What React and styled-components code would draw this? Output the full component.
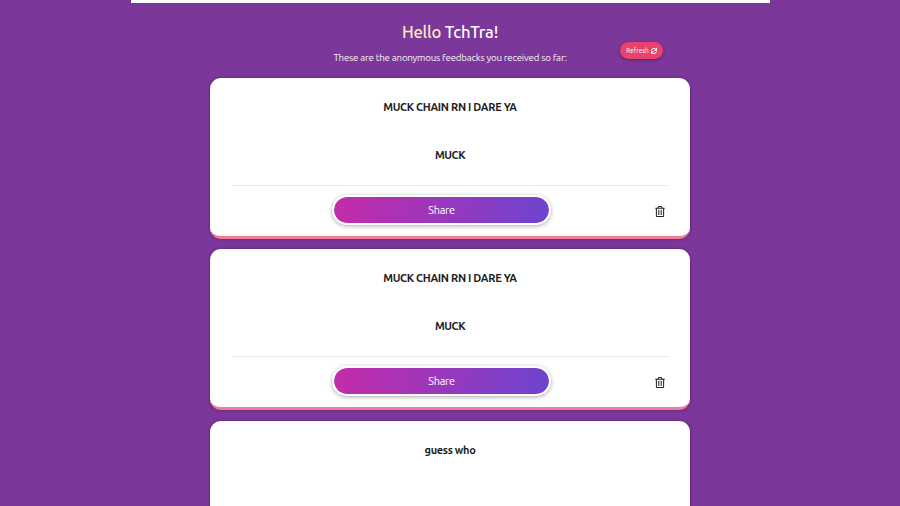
import styled, { createGlobalStyle } from "styled-components"
import { FaRegTrashAlt, FaSync } from "react-icons/fa"

const messages = [
  { title: "MUCK CHAIN RN I DARE YA", text: "MUCK" },
  { title: "MUCK CHAIN RN I DARE YA", text: "MUCK" },
  { title: "guess who" },
]

export default () => (
  <>
    <GlobalStyle />
    <Page>
      <TopBanner />
      <Header>
        <Greeting>
          <span>Hello</span> TchTra!
        </Greeting>
        <Subtitle>These are the anonymous feedbacks you received so far:</Subtitle>
        <RefreshButton>
          Refresh <FaSync />
        </RefreshButton>
      </Header>
      <CardList>
        {messages.map((m, i) => (
          <Card key={i}>
            <CardTitle>{m.title}</CardTitle>
            {m.text && (
              <>
                <CardText>{m.text}</CardText>
                <CardFooter>
                  <ShareButton>Share</ShareButton>
                  <DeleteButton aria-label="Delete">
                    <FaRegTrashAlt />
                  </DeleteButton>
                </CardFooter>
              </>
            )}
          </Card>
        ))}
      </CardList>
    </Page>
  </>
)

const GlobalStyle = createGlobalStyle`
  * {
    box-sizing: border-box;
  }
  body {
    margin: 0;
    background: #7b3799;
    font-family: Ubuntu, "Noto Sans", "Open Sans", sans-serif;
    overflow: hidden;
  }
  button {
    font-family: inherit;
    padding: 0;
    cursor: pointer;
  }
`

const Page = styled.div`
  height: 506px;
  overflow: hidden;
  display: flex;
  flex-direction: column;
  align-items: center;
`

const TopBanner = styled.div`
  flex: none;
  width: 639px;
  height: 3px;
  background: #fff;
`

const Header = styled.header`
  position: relative;
  flex: none;
  width: 480px;
  height: 75px;
  padding-top: 17px;
  text-align: center;
  color: #fff;
`

const Greeting = styled.h1`
  margin: 0;
  font-size: 16.6px;
  line-height: 24px;
  font-weight: 500;
  letter-spacing: -0.2px;
  white-space: nowrap;

  span {
    color: #ffe9bd;
  }
`

const Subtitle = styled.p`
  margin: 6px 0 0;
  font-size: 9.7px;
  line-height: 16px;
  letter-spacing: -0.2px;
  color: #f8f2fa;
  white-space: nowrap;
`

const RefreshButton = styled.button`
  position: absolute;
  top: 39px;
  right: 27px;
  width: 43px;
  height: 17px;
  display: flex;
  align-items: center;
  justify-content: center;
  gap: 2px;
  border: none;
  border-radius: 9px;
  background: #e8436c;
  box-shadow: 0 1px 3px rgba(0, 0, 0, 0.35);
  color: #fff;
  font-size: 6.4px;

  svg {
    width: 6px;
    height: 6px;
  }
`

const CardList = styled.main`
  width: 480px;
  display: flex;
  flex-direction: column;
  gap: 10.4px;
`

const Card = styled.article`
  flex: none;
  height: 161px;
  padding: 19px 22px 0;
  border-bottom: 3px solid #f07c98;
  border-radius: 11px;
  background: #fff;
  box-shadow: 0 0 3px rgba(50, 10, 90, 0.5);
  color: #1c1c1c;
  text-align: center;
`

const CardTitle = styled.h2`
  margin: 0;
  height: 20px;
  font-size: 11px;
  line-height: 20px;
  font-weight: 600;
  letter-spacing: -0.32px;
`

const CardText = styled.p`
  margin: 28px 0 0;
  height: 40px;
  font-size: 11px;
  line-height: 20px;
  font-weight: 600;
  letter-spacing: -0.4px;
`

const CardFooter = styled.footer`
  display: flex;
  align-items: flex-start;
  justify-content: space-between;
  border-top: 1px solid #e9e9e9;
  padding: 9px 3px 0 100px;
`

const ShareButton = styled.button`
  width: 219px;
  height: 30px;
  border: 2px solid #fff;
  border-radius: 15px;
  background: linear-gradient(100deg, #c62ba8, #6b45d0) border-box;
  background-clip: padding-box;
  box-shadow: 0 1px 4px rgba(0, 0, 0, 0.35);
  color: #fff;
  font-size: 10.9px;
  line-height: 26px;
  letter-spacing: -0.28px;
`

const DeleteButton = styled.button`
  display: flex;
  margin-top: 11px;
  border: none;
  background: none;
  color: #222;

  svg {
    width: 10px;
    height: 11px;
  }
`
